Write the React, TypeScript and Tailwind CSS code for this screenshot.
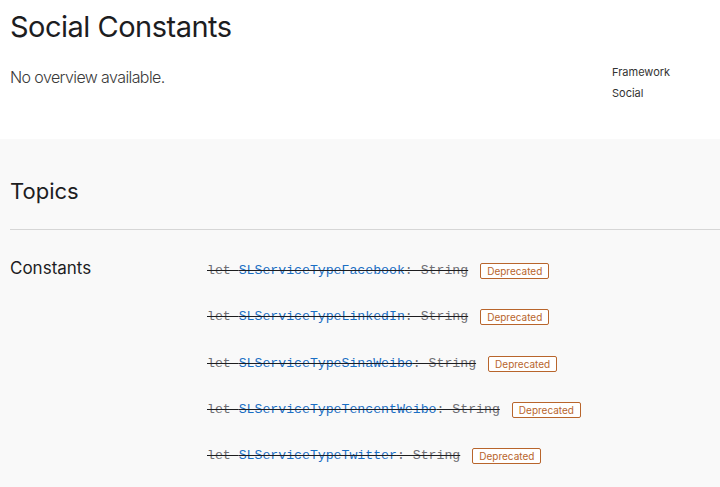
const constants = [
  "SLServiceTypeFacebook",
  "SLServiceTypeLinkedIn",
  "SLServiceTypeSinaWeibo",
  "SLServiceTypeTencentWeibo",
  "SLServiceTypeTwitter",
]

function Deprecated() {
  return (
    <span className="ml-3 inline-flex h-[16px] items-center rounded-[2px] border border-[#b8652c] bg-white px-[6px] text-[10px] leading-none text-[#b8652c]">
      Deprecated
    </span>
  )
}

export default function App() {
  return (
    <div className="min-h-[487px] bg-white font-['Inter','Liberation_Sans',sans-serif] text-[#1d1d1f]">
      <section className="h-[139px] px-[10px] pt-[9px]">
        <h1 className="text-[29px] font-normal leading-[36px] tracking-[-0.5px]">Social Constants</h1>
        <div className="mt-[21px] flex">
          <p className="flex-1 text-[16px] font-light leading-[22px] tracking-[-0.6px] text-[#3a3a3a]">No overview available.</p>
          <div className="-mt-[4px] w-[98px] text-[11px] leading-[21px] text-[#333]">
            <div>Framework</div>
            <div>Social</div>
          </div>
        </div>
      </section>

      <section className="h-[348px] bg-[#f9f9f9]">
        <h2 className="px-[10px] pt-[38px] text-[22px] leading-[28px]">Topics</h2>
        <div className="ml-[10px] mt-[24px] h-px bg-[#d6d6d6]" />
        <div className="grid grid-cols-[197px_1fr] pl-[10px] pt-[26px]">
          <h3 className="text-[17px] leading-[24px]">Constants</h3>
          <div className="flex flex-col gap-[24.3px] pt-[4px]">
            {constants.map((name) => (
              <div key={name} className="flex h-[22px] items-center">
                <code className="font-['Liberation_Mono',monospace] text-[13.2px] leading-[22px] line-through">
                  <span className="text-[#6e6e73]">let </span>
                  <span className="text-[#1a6fc4]">{name}</span>
                  <span className="text-[#6e6e73]">: String</span>
                </code>
                <Deprecated />
              </div>
            ))}
          </div>
        </div>
      </section>
    </div>
  )
}
